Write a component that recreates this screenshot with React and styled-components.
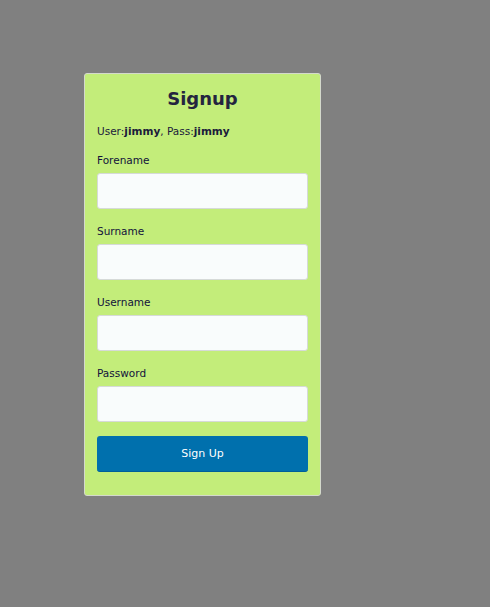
import React from "react";
import styled, { createGlobalStyle } from "styled-components";

const GlobalStyle = createGlobalStyle`
  body {
    margin: 0;
    background: #808080;
    font-family: "DejaVu Sans", Verdana, sans-serif;
  }
`;

const Page = styled.div`
  padding: 73px 0 0 84px;
  min-height: 607px;
  box-sizing: border-box;
`;

const Card = styled.form`
  width: 237px;
  box-sizing: border-box;
  background: #c3ed7a;
  border: 1px solid #d4d9cc;
  border-radius: 3px;
  padding: 11px 12px 23px 12px;
  display: flex;
  flex-direction: column;
`;

const Title = styled.h2`
  margin: 0;
  font-size: 18px;
  line-height: 28px;
  font-weight: bold;
  text-align: center;
  color: #24243f;
`;

const Hint = styled.p`
  margin: 10px 0 13px;
  font-size: 10.5px;
  line-height: 16px;
  color: #1b1b3a;
`;

const Field = styled.div`
  display: flex;
  flex-direction: column;
  margin-bottom: 14px;
`;

const Label = styled.label`
  font-size: 10.5px;
  line-height: 16px;
  color: #12123a;
  margin-bottom: 5px;
`;

const Input = styled.input`
  height: 36px;
  box-sizing: border-box;
  border: 1px solid #d6dad8;
  border-radius: 3px;
  background: #f9fcfc;
  font-family: inherit;
  padding: 0 8px;
`;

const Button = styled.button`
  height: 36px;
  border: none;
  border-bottom: 1px solid #005f9a;
  border-radius: 3px;
  background: #0070ad;
  color: #ffffff;
  font-family: inherit;
  font-size: 11px;
  cursor: pointer;
`;

const fields = ["Forename", "Surname", "Username", "Password"];

export default function App() {
  return (
    <>
      <GlobalStyle />
      <Page>
        <Card onSubmit={(e) => e.preventDefault()}>
          <Title>Signup</Title>
          <Hint>
            User:<b>jimmy</b>, Pass:<b>jimmy</b>
          </Hint>
          {fields.map((name) => (
            <Field key={name}>
              <Label>{name}</Label>
              <Input type={name === "Password" ? "password" : "text"} />
            </Field>
          ))}
          <Button type="submit">Sign Up</Button>
        </Card>
      </Page>
    </>
  );
}
